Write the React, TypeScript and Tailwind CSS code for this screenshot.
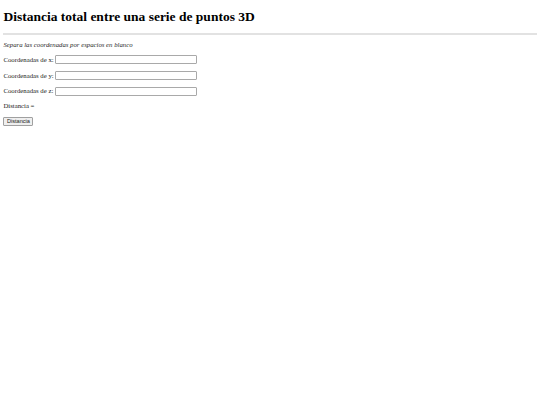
import { useState } from "react";

// Distancia total entre puntos 3D
const AXES = ["x", "y", "z"] as const;

export default function App() {
  const [vals, setVals] = useState<Record<string, string>>({ x: "", y: "", z: "" });

  return (
    <div className="min-h-screen bg-white px-[3.4px] py-[3.4px] text-black font-['Liberation_Serif',serif]">
      <h1 className="mt-[5.7px] mb-[8.5px] text-[13.5px] leading-[15.5px] font-bold">
        Distancia total entre una serie de puntos 3D
      </h1>
      <hr className="my-[3.4px] border-0 border-t-2 border-t-[#e2e2e2]" />
      <p className="mt-[5.9px] mb-[6.75px] text-[6.75px] leading-[7.75px] italic text-[#2a2a2a]">
        Separa las coordenadas por espacios en blanco
      </p>
      {AXES.map((a) => (
        <p
          key={a}
          className="my-[6.75px] flex h-[8.9px] items-center text-[6.75px] leading-[7.75px] text-[#222]"
        >
          <span>Coordenadas de {a}:</span>
          <input
            type="text"
            value={vals[a]}
            onChange={(e) => setVals({ ...vals, [a]: e.target.value })}
            className="ml-[1.5px] h-[8.9px] w-[142px] rounded-[1px] border border-[#a9a9a9] bg-white px-[1px] text-[5.6px] outline-none font-['Liberation_Sans',sans-serif]"
          />
        </p>
      ))}
      <p className="my-[6.75px] text-[6.75px] leading-[7.75px] text-[#222]">Distancia =</p>
      <button className="block h-[8.9px] rounded-[1px] border border-[#a0a0a0] bg-[#efefef] px-[2.5px] text-[5.6px] leading-none text-[#222] font-['Liberation_Sans',sans-serif]">
        Distancia
      </button>
    </div>
  );
}
